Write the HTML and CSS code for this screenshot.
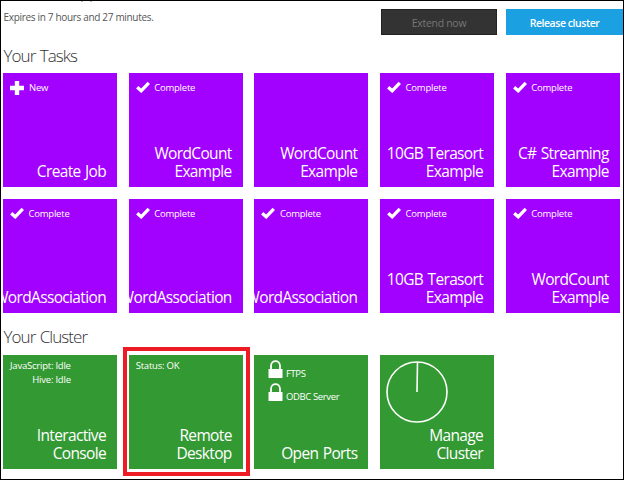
FILE: index.html
```
<!DOCTYPE html>
<html lang="en">
<head>
<meta charset="utf-8">
<title>Cluster dashboard</title>
<link rel="stylesheet" href="styles.css">
</head>
<body>
<svg width="0" height="0" class="defs">
  <symbol id="check" viewBox="0 0 14 12"><path d="M1.2 6.2L5.2 9.8L12.8 1.8" fill="none" stroke="#fff" stroke-width="3.3"/></symbol>
  <symbol id="plus" viewBox="0 0 14 14"><path d="M7 0V14M0 7H14" fill="none" stroke="#fff" stroke-width="4.4"/></symbol>
  <symbol id="lock" viewBox="0 0 15 18"><path d="M3 10V6C3 -.6 12 -.6 12 6V10" fill="none" stroke="#fff" stroke-width="1.8"/><path d="M.5 9H14.5V18H.5Z" fill="#fff"/></symbol>
</svg>
<div class="page">
  <svg class="remnant" viewBox="0 0 12 1"><path d="M0 0H2V1H0ZM9 0H11V1H9Z" fill="#bbb"/></svg>
  <header class="top">
    <p class="expires">Expires in 7 hours and 27 minutes.</p>
    <div class="buttons">
      <button class="btn extend">Extend now</button>
      <button class="btn release">Release cluster</button>
    </div>
  </header>
  <h2 class="tasks-heading">Your Tasks</h2>
  <section class="tiles tasks">
    <div class="tile"><div class="status"><svg class="plus"><use href="#plus"/></svg>New</div><div class="name">Create Job</div></div>
    <div class="tile"><div class="status"><svg class="check"><use href="#check"/></svg>Complete</div><div class="name">WordCount<br>Example</div></div>
    <div class="tile"><div class="name">WordCount<br>Example</div></div>
    <div class="tile"><div class="status"><svg class="check"><use href="#check"/></svg>Complete</div><div class="name">10GB Terasort<br>Example</div></div>
    <div class="tile"><div class="status"><svg class="check"><use href="#check"/></svg>Complete</div><div class="name">C# Streaming<br>Example</div></div>
    <div class="tile"><div class="status"><svg class="check"><use href="#check"/></svg>Complete</div><div class="name">WordAssociation</div></div>
    <div class="tile"><div class="status"><svg class="check"><use href="#check"/></svg>Complete</div><div class="name">WordAssociation</div></div>
    <div class="tile"><div class="status"><svg class="check"><use href="#check"/></svg>Complete</div><div class="name">WordAssociation</div></div>
    <div class="tile"><div class="status"><svg class="check"><use href="#check"/></svg>Complete</div><div class="name">10GB Terasort<br>Example</div></div>
    <div class="tile"><div class="status"><svg class="check"><use href="#check"/></svg>Complete</div><div class="name">WordCount<br>Example</div></div>
  </section>
  <h2 class="cluster-heading">Your Cluster</h2>
  <section class="tiles cluster">
    <div class="tile"><div class="states">JavaScript: Idle<br>Hive: Idle</div><div class="name">Interactive<br>Console</div></div>
    <div class="tile selected"><div class="states">Status: OK</div><div class="name">Remote<br>Desktop</div></div>
    <div class="tile"><div class="ports"><div><svg class="lock"><use href="#lock"/></svg>FTPS</div><div><svg class="lock"><use href="#lock"/></svg>ODBC Server</div></div><div class="name">Open Ports</div></div>
    <div class="tile"><svg class="dial" viewBox="0 0 62 62"><circle cx="31" cy="31" r="30" fill="none" stroke="#fff" stroke-width="1.6"/><path d="M31 31L31.5 1" stroke="#fff" stroke-width="1.6"/></svg><div class="name">Manage<br>Cluster</div></div>
  </section>
</div>
</body>
</html>
```
FILE: styles.css
```
* { box-sizing: border-box; }
body { margin: 0; background: #fff; font-family: "Open Sans", "Noto Sans", sans-serif; overflow: hidden; }
.defs { display: block; }
.page { position: relative; width: 624px; height: 480px; border: 1px solid #000; padding: 8px 0 0 2px; overflow: hidden; }
.remnant { position: absolute; left: 80px; top: 0; width: 12px; height: 1px; }
.top { display: flex; justify-content: space-between; height: 38px; }
.expires { margin: 0 0 0 .5px; font-size: 10px; line-height: 16px; color: #555; letter-spacing: -.32px; white-space: nowrap; }
.buttons { display: flex; gap: 9px; }
.btn { width: 117px; height: 26px; padding: 1px 0 0; border: 1px solid #222; background: #333; color: #777; font: 10.5px/22px "Open Sans", sans-serif; }
.extend { width: 116px; letter-spacing: -.3px; }
.release { border-color: #1b9fe0; background: #1ba1e2; color: #fff; font-size: 10.5px; font-weight: 600; letter-spacing: -.45px; }
h2 { margin: 0 0 0 .5px; font-size: 17px; font-weight: 300; color: #333; white-space: nowrap; letter-spacing: -.95px; word-spacing: 1px; }
.tasks-heading { height: 26px; line-height: 17px; }
.cluster-heading { margin-top: 15px; height: 27px; line-height: 18px; }
.tiles { display: grid; grid-template-columns: repeat(5, 114px); column-gap: 11.7px; row-gap: 12px; }
.tile { position: relative; display: flex; flex-direction: column; height: 114px; padding: 7px 11px 7px 7px; background: #a200ff; color: #fff; overflow: hidden; }
.cluster .tile { background: #339933; }
.status { display: flex; align-items: center; height: 15px; font-size: 9.5px; letter-spacing: -.22px; white-space: nowrap; }
.plus { width: 14px; height: 14px; margin-right: 5px; }
.check { width: 14px; height: 12px; margin-right: 4.5px; margin-top: -2px; }
.name { align-self: flex-end; margin-top: auto; text-align: right; font-size: 15.5px; line-height: 18px; letter-spacing: -.65px; word-spacing: 1px; white-space: nowrap; }
.states { align-self: flex-start; text-align: right; margin-top: -3px; font-size: 9.5px; line-height: 14px; letter-spacing: -.22px; white-space: nowrap; }
.cluster .tile.selected { overflow: visible; }
.selected::after { content: ""; position: absolute; inset: -8px -7px -7px -6px; border: 4px solid #ed1c24; }
.ports { margin: -2px 0 0 6.5px; font-size: 9.5px; letter-spacing: -.36px; white-space: nowrap; }
.ports div { display: flex; align-items: flex-end; height: 23px; line-height: 15px; padding-bottom: 2px; }
.lock { width: 15px; height: 18px; margin: 0 3px 3px 0; }
.dial { position: absolute; left: 6px; top: 6px; width: 62px; height: 62px; }
```
